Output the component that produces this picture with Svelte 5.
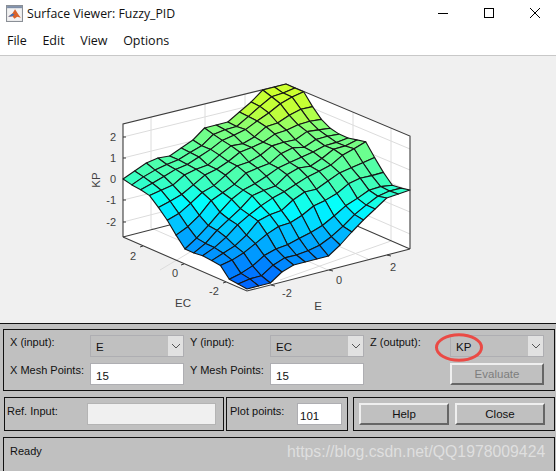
<script>
  const F = [247, 291], RV = [163, -42], LV = [-124, -54];
  const edgeU0 = [2,3,4,14,15,16,15,15,25,36,45,53,55,56,58];
  const edgeU1 = [59,57,56,65,76,88,86,84,84,86,91,100,111,111,111];
  const edgeV0 = [2,2,2,10,14,14,14,14,22,32,41,49,57,58,59];
  const edgeV1 = [58,63,68,70,69,74,79,88,88,88,95,102,111,111,111];
  const N = 14;
  function h(j, i) {
    const u = j / N, v = i / N;
    const bil = (1 - u) * (1 - v) * 2 + u * (1 - v) * 59 + (1 - u) * v * 58 + u * v * 111;
    const coons = (1 - u) * edgeU0[i] + u * edgeU1[i] + (1 - v) * edgeV0[j] + v * edgeV1[j] - bil;
    const s = Math.sin(Math.PI * u) * Math.sin(Math.PI * v);
    const smooth = bil + 14 * s + 3.4 * Math.sin(j * 1.9 + i * 0.7) * Math.sin(i * 1.3);
    const w = Math.min(0.85, 3.2 * Math.min(u, 1 - u, v, 1 - v));
    return coons * (1 - w) + smooth * w;
  }
  function pt(j, i) {
    const a = j / N, b = i / N;
    return [F[0] + a * RV[0] + b * LV[0], F[1] + a * RV[1] + b * LV[1] - h(j, i)];
  }
  const stops = [[0,0,95,255],[30,0,185,255],[48,0,255,255],[60,60,255,190],[88,125,255,125],[98,190,255,60],[111,205,255,45]];
  function col(v) {
    for (let k = 1; k < stops.length; k++) {
      if (v <= stops[k][0]) {
        const a = stops[k - 1], b = stops[k], t = Math.max(0, (v - a[0]) / (b[0] - a[0]));
        return `rgb(${Math.round(a[1] + t * (b[1] - a[1]))},${Math.round(a[2] + t * (b[2] - a[2]))},${Math.round(a[3] + t * (b[3] - a[3]))})`;
      }
    }
    return 'rgb(205,255,45)';
  }
  const quads = [];
  for (let s = 2 * N - 2; s >= 0; s--) {
    for (let j = 0; j < N; j++) {
      const i = s - j;
      if (i < 0 || i >= N) continue;
      const ps = [pt(j, i), pt(j + 1, i), pt(j + 1, i + 1), pt(j, i + 1)];
      quads.push({
        points: ps.map((p) => p[0].toFixed(1) + ',' + p[1].toFixed(1)).join(' '),
        fill: col((h(j, i) + h(j + 1, i) + h(j + 1, i + 1) + h(j, i + 1)) / 4)
      });
    }
  }
  const zTicks = [['2', 137], ['1', 158], ['0', 179], ['-1', 200], ['-2', 222]];
</script>

<div class="win">
  <header class="title">
    <svg class="logo" viewBox="0 0 16 16" width="17" height="17">
      <rect x="0.5" y="0.5" width="15" height="15" fill="#f2f2f2" stroke="#8a8f96"/>
      <rect x="1" y="1" width="14" height="2" fill="#7f8fa8"/>
      <path d="M2 11 L6 8 L8.5 4 L12 9.5 L14 12 L10.5 11 L8 13 L6 10.5 Z" fill="#d9622a"/>
      <path d="M2 11 L6 8 L8 9 L6 10.5 Z" fill="#3f6fb5"/>
    </svg>
    <span class="title-text">Surface Viewer: Fuzzy_PID</span>
    <div class="controls">
      <svg width="46" height="31" viewBox="0 0 46 31"><path d="M18 13.5H28" stroke="#000" fill="none"/></svg>
      <svg width="46" height="31" viewBox="0 0 46 31"><rect x="18.5" y="8.5" width="9" height="9" stroke="#000" fill="none"/></svg>
      <svg width="46" height="31" viewBox="0 0 46 31"><path d="M18 8L28 18M28 8L18 18" stroke="#000" fill="none"/></svg>
    </div>
  </header>
  <nav class="menu"><span>File</span><span>Edit</span><span>View</span><span>Options</span></nav>

  <main class="plot">
    <svg width="556" height="267" viewBox="0 56 556 267">
      <polygon points="123,124 286,84 286,195 123,237" fill="#fff"/>
      <polygon points="286,84 410,136 410,249 286,195" fill="#fff"/>
      <polygon points="123,237 286,195 410,249 247,291" fill="#fff"/>
      <g class="grid">
        <path d="M123,137 L286,97 L410,149 M123,158 L286,118 L410,170 M123,179 L286,139 L410,191 M123,200 L286,160 L410,212 M123,222 L286,180 L410,234"/>
        <path d="M151,117 V228 M205,104 V216 M245,94 V205 M353,112 V224 M391,128 V241"/>
        <path d="M151,228 L274,282 M205,216 L328,270 M245,205 L368,259 M160,270 L286,195 M216,255 L340,205 M280,280 L391,241"/>
      </g>
      <path class="box" d="M123,237 V124 L286,84 L410,136 V249 M123,237 L286,195 L410,249 M123,237 L247,291 L410,249"/>
      <g class="ticks">
        <path d="M123,137h3 M123,158h3 M123,179h3 M123,200h3 M123,222h3 M143,246l-3,1 M184,264l-3,1 M226,282l-3,1 M271,285l4,1 M329,270l4,1 M387,255l4,1"/>
      </g>
      {#each quads as q}
        <polygon points={q.points} fill={q.fill} class="face"/>
      {/each}
      <g class="lab">
        {#each zTicks as t}
          <text x="116" y={t[1] + 4} text-anchor="end">{t[0]}</text>
        {/each}
        <text x="133" y="260" text-anchor="middle">2</text>
        <text x="175" y="277" text-anchor="middle">0</text>
        <text x="214" y="295" text-anchor="middle">-2</text>
        <text x="287" y="297" text-anchor="middle">-2</text>
        <text x="339" y="284" text-anchor="middle">0</text>
        <text x="393" y="271" text-anchor="middle">2</text>
        <text class="big" x="183" y="307" text-anchor="middle">EC</text>
        <text class="big" x="318" y="310" text-anchor="middle">E</text>
        <text class="big" transform="translate(100 180) rotate(-90)" text-anchor="middle">KP</text>
      </g>
    </svg>
  </main>

  <section class="panel">
    <div class="box-frame params">
      <span class="lbl">X (input):</span>
      <div class="select"><span>E</span><i><svg width="10" height="6" viewBox="0 0 10 6"><path d="M1 1L5 5L9 1" fill="none" stroke="#555"/></svg></i></div>
      <span class="lbl far">Y (input):</span>
      <div class="select"><span>EC</span><i><svg width="10" height="6" viewBox="0 0 10 6"><path d="M1 1L5 5L9 1" fill="none" stroke="#555"/></svg></i></div>
      <span class="lbl far">Z (output):</span>
      <div class="select"><span>KP</span><i><svg width="10" height="6" viewBox="0 0 10 6"><path d="M1 1L5 5L9 1" fill="none" stroke="#555"/></svg></i></div>
      <span class="lbl">X Mesh Points:</span>
      <div class="edit">15</div>
      <span class="lbl far">Y Mesh Points:</span>
      <div class="edit">15</div>
      <span></span>
      <div class="btn disabled">Evaluate</div>
    </div>

    <div class="row2">
      <div class="box-frame ref">
        <span class="lbl">Ref. Input:</span>
        <div class="edit off"></div>
      </div>
      <div class="box-frame pts">
        <span class="lbl">Plot points:</span>
        <div class="edit num">101</div>
      </div>
      <div class="box-frame acts">
        <div class="btn">Help</div>
        <div class="btn">Close</div>
      </div>
    </div>

    <div class="box-frame status"><span class="lbl">Ready</span></div>
  </section>

  <svg class="ring" width="52" height="31" viewBox="0 0 52 31"><ellipse cx="26" cy="15.5" rx="22.5" ry="12.7" fill="none" stroke="#ea4a45" stroke-width="3"/></svg>
  <div class="mark">https://blog.csdn.net/QQ1978009424</div>
</div>

<style>
  :global(body) { margin: 0; background: #fff; }
  .win { position: relative; width: 556px; height: 471px; overflow: hidden; display: flex; flex-direction: column; font-family: "Liberation Sans", Arial, sans-serif; }
  .title { height: 31px; display: flex; align-items: center; padding-left: 6px; gap: 4px; background: #fff; }
  .logo { flex: none; margin-top: -5px; }
  .title-text { font: 12.3px "Open Sans", sans-serif; color: #111; margin-top: -4px; }
  .controls { margin-left: auto; display: flex; margin-right: -2px; margin-top: -1px; }
  .controls svg { display: block; }
  .menu { height: 24px; display: flex; padding-left: 7px; gap: 15.6px; font: 12.5px "Open Sans", sans-serif; color: #111; align-items: flex-start; background: #fff; border-bottom: 1px solid #a0a0a0; line-height: 20px; }
  .plot { height: 267px; background: #f0f0f0; border-top: 1px solid #c8c8c8; margin-top: -1px; }
  .plot svg { display: block; }
  .grid path { fill: none; stroke: #dcdcdc; stroke-width: 1; }
  .box { fill: none; stroke: #3c3c3c; stroke-width: 1.1; }
  .ticks path { fill: none; stroke: #3c3c3c; }
  .face { stroke: #161616; stroke-width: 1.1; stroke-linejoin: round; }
  .lab text { font: 11px "Liberation Sans", sans-serif; fill: #404040; }
  .lab text.big { font-size: 11.5px; }
  .panel { flex: 1; background: #c0c0c0; border-top: 1px solid #111; padding: 5px 0 0 3px; display: flex; flex-direction: column; gap: 6px; box-sizing: border-box; }
  .box-frame { border: 1px solid #111; box-sizing: border-box; }
  .lbl { font-size: 11px; color: #111; white-space: nowrap; margin-top: 1px; }
  .far { padding-left: 6px; }
  .params { width: 552px; height: 62px; display: grid; grid-template-columns: 80px 94px 86px 94px 86px 94px; grid-template-rows: 22px 22px; row-gap: 6px; padding: 5px 0 0 6px; }
  .params > .lbl { align-self: start; }
  .select { background: #c0c0c0; border: 1px solid #aeaeb2; display: flex; align-items: center; justify-content: space-between; font-size: 11.5px; color: #111; box-sizing: border-box; }
  .select span { padding: 2px 0 0 5px; }
  .select i { width: 15px; align-self: stretch; background: #e1e1e1; display: flex; align-items: center; justify-content: center; }
  .edit { background: #fff; border: 1px solid #aeaeb2; font-size: 11.5px; color: #111; padding: 5px 0 0 5px; box-sizing: border-box; line-height: 14px; }
  .edit.off { background: #f0f0f0; border-color: #b4b4b4; width: 129px; height: 22px; }
  .edit.num { width: 45px; height: 22px; padding-left: 2px; }
  .btn { background: #c0c0c0; font-size: 11.5px; color: #111; display: flex; align-items: center; justify-content: center; box-sizing: border-box; border: 2px solid; border-color: #efefef #666 #666 #efefef; }
  .btn.disabled { color: #7d7d7d; }
  .row2 { display: flex; height: 34px; margin-left: 1px; }
  .ref { width: 220px; display: flex; align-items: flex-start; padding: 5px 0 0 2px; }
  .ref .lbl { width: 80px; margin-top: 2px; }
  .pts { width: 122px; margin-left: 2px; display: flex; justify-content: space-between; padding: 5px 5px 0 3px; }
  .pts .lbl { margin-top: 2px; }
  .acts { width: 202px; margin-left: 5px; display: flex; gap: 6px; padding: 5px 0 0 5px; }
  .acts .btn { width: 90px; height: 22px; }
  .status { width: 552px; flex: 1; border-bottom: 0; padding: 3px 0 0 6px; }
  .ring { position: absolute; left: 433px; top: 332px; }
  .mark { position: absolute; left: 287px; top: 443px; font-size: 15.8px; color: rgba(255, 255, 255, 0.5); white-space: nowrap; }
</style>
